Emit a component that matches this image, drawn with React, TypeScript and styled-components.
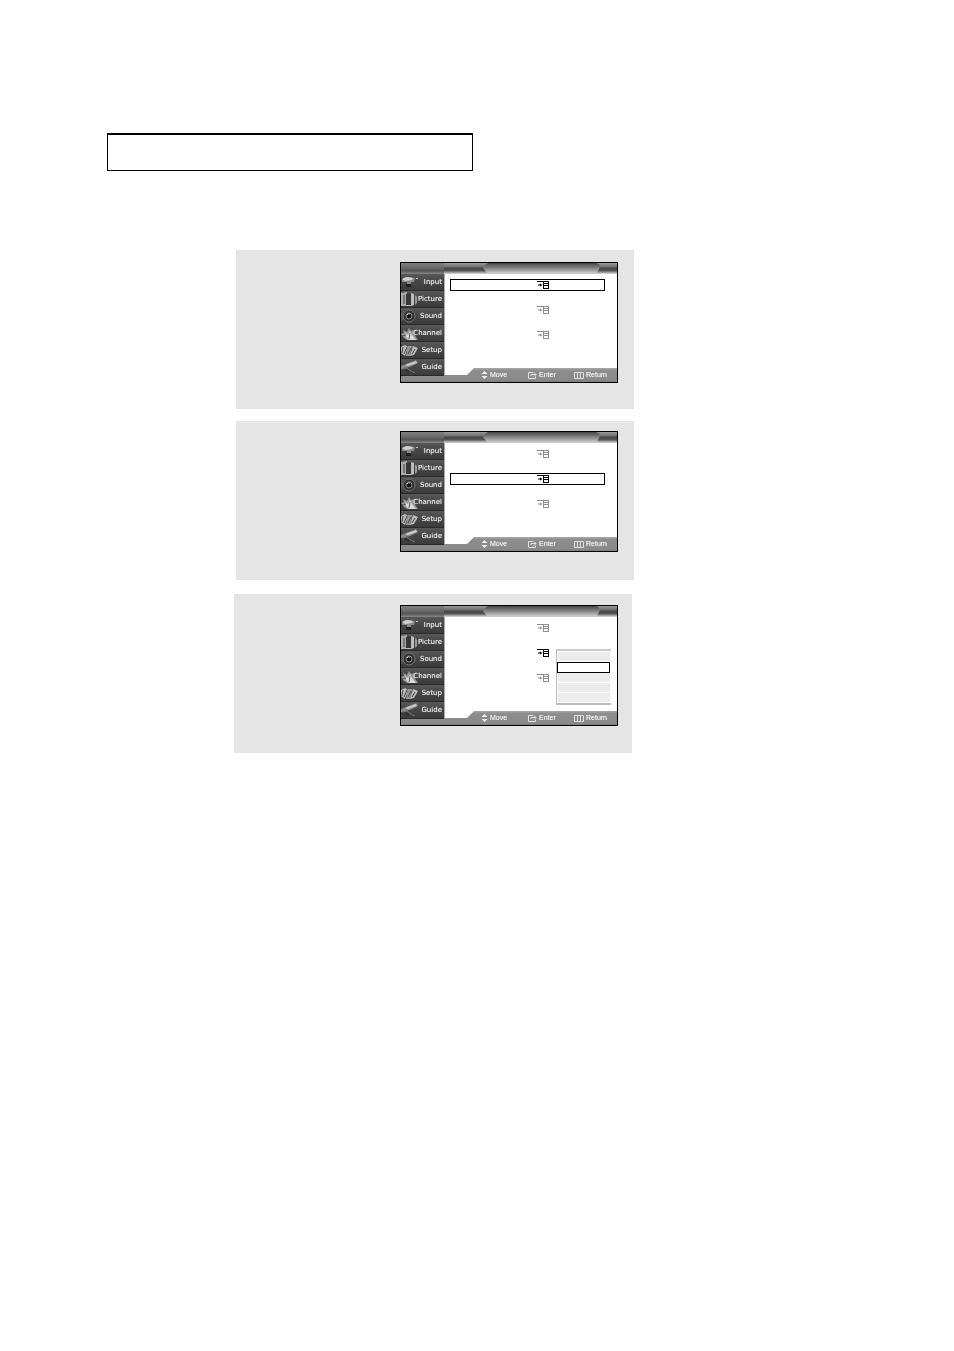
import React from "react";
import styled, { createGlobalStyle } from "styled-components";

const GlobalStyle = createGlobalStyle`
  * { box-sizing: border-box; }
  body { margin: 0; background: #fff; font-family: "Liberation Sans", Arial, sans-serif; }
  ul { list-style: none; margin: 0; padding: 0; }
  button { appearance: none; border: 0; margin: 0; padding: 0; background: none; font: inherit; color: inherit; }
`;

const Page = styled.main`
  padding: 133px 107px;
`;

const TitleBox = styled.header`
  max-width: 366px;
  height: 38px;
  border: 1px solid #000;
  border-top-width: 2px;
`;

const Steps = styled.div`
  display: flex;
  flex-direction: column;
  padding: 79px 0 0 127px;
`;

const Step = styled.section<{ $indent: number; $gap: number; $top: number }>`
  display: flex;
  justify-content: flex-end;
  width: 100%;
  max-width: 398px;
  min-height: 159px;
  margin: ${(p) => p.$gap}px 0 0 ${(p) => p.$indent}px;
  padding: ${(p) => p.$top}px ${(p) => (p.$indent ? 16 : 14)}px 26px 0;
  background: #e5e5e5;
`;

const Screen = styled.div`
  position: relative;
  display: grid;
  grid-template-columns: 44px 1fr;
  grid-template-rows: 11px 94px 7px 7px;
  width: 218px;
  height: 121px;
  border: 1px solid #000;
  background: #fff;
`;

const TopBar = styled.div`
  grid-column: 1 / 3;
  grid-row: 1;
  display: flex;
  filter: blur(0.4px);
`;

const Sidebar = styled.nav`
  grid-column: 1;
  grid-row: 2 / 4;
  z-index: 1;
  border-right: 1px solid #aaa;
`;

const MenuList = styled.ul`
  display: flex;
  flex-direction: column;
  height: 100%;
`;

const MenuItem = styled.li`
  flex: 1;
  display: flex;
  border-bottom: 1px solid #2a2a2a;
  background: linear-gradient(#585858, #484848 40%, #3b3b3b);
`;

const MenuButton = styled.button`
  flex: 1;
  display: flex;
  align-items: center;
  justify-content: space-between;
  padding-right: 2px;
`;

const MenuIcon = styled.svg`
  width: 17px;
  height: 16px;
  flex: none;
  filter: blur(0.5px);
`;

const MenuLabel = styled.span`
  margin-left: -6px;
  font: 7px/10px "DejaVu Sans", sans-serif;
  color: #eee;
  text-shadow: 0 0 1px #aaa;
  filter: blur(0.5px);
`;

const Options = styled.ul`
  grid-column: 2;
  grid-row: 2;
  display: flex;
  flex-direction: column;
  gap: 13px;
  padding: 5px 12px 0 5px;
`;

const Option = styled.li<{ $framed: boolean; $active: boolean }>`
  display: flex;
  align-items: flex-end;
  height: 12px;
  padding: 0 0 1px 86px;
  border: 1px solid ${(p) => (p.$framed ? "#000" : "transparent")};
  color: ${(p) => (p.$active ? "#000" : "#8e8e8e")};
`;

const HelpBar = styled.footer`
  grid-column: 1 / 3;
  grid-row: 3 / 5;
  display: flex;
  align-items: center;
  padding-left: 80px;
  background: linear-gradient(#a8a8a8, #8c8c8c 20%, #8a8a8a 85%, #7c7c7c);
  clip-path: polygon(0 7px, 66px 7px, 73px 0, 100% 0, 100% 100%, 0 100%);
  color: #f4f4f4;
  font-size: 7px;
  line-height: 10px;
  text-shadow: 0 0 1px #ccc;
`;

const HelpItem = styled.span<{ $width: number }>`
  display: flex;
  align-items: center;
  gap: 2px;
  width: ${(p) => p.$width}px;
  filter: blur(0.5px);
`;

const HelpIcon = styled.svg`
  flex: none;
  height: 9px;
`;

const Popup = styled.ul`
  position: absolute;
  top: 43px;
  right: 6px;
  display: flex;
  flex-direction: column;
  width: 55px;
  padding: 1px 1px 0;
  border: solid #bdbdbd;
  border-width: 2px 0 2px 1px;
  border-top-color: #c9c9c9;
  background: #fff;
`;

const PopupRow = styled.li<{ $active: boolean }>`
  height: ${(p) => (p.$active ? 11 : 10)}px;
  margin-left: ${(p) => (p.$active ? -1 : 0)}px;
  border: 0 solid #fff;
  border-bottom-width: 1px;
  background: #ececec;
  ${(p) => p.$active && "border: 1px solid #000; background: #fff;"}
`;

const menu = [
  {
    label: "Input",
    art: (
      <>
        <path d="M1 6 Q2 3 6 3 L14 4 L13 8 L10 8 L10 11 L6 11 L6 8 L1 8Z" fill="#888" />
        <path d="M1 5 L6 3 L12 4 L11 6 L4 7Z" fill="#d2d2d2" />
        <path d="M5 10 L10 10 L10 13 L5 13Z" fill="#1f1f1f" />
        <path d="M15 4.5 H17" stroke="#ccc" />
      </>
    ),
  },
  {
    label: "Picture",
    art: (
      <>
        <path d="M0 2 L6 1 V15 H0Z" fill="#a9a9a9" />
        <path d="M2 4 H4 V13 H2Z" fill="#777" />
        <path d="M5 3 L10 2 V14 H5Z" fill="#373737" />
        <path d="M10 2 L13 3 V14 L10 15 H5 V14 H10Z" fill="#bdbdbd" />
        <path d="M14 4 L16 6 V12 L14 14Z" fill="#999" />
      </>
    ),
  },
  {
    label: "Sound",
    art: (
      <>
        <circle cx="8" cy="8" r="6" fill="#333" stroke="#757575" />
        <circle cx="8" cy="8" r="3" fill="#111" stroke="#888" />
        <path d="M6 7 Q7 5 9 6" stroke="#c2c2c2" fill="none" />
        <path d="M1 3 V13" stroke="#666" />
      </>
    ),
  },
  {
    label: "Channel",
    art: (
      <>
        <path d="M0 9 L3 8 L2 5 L6 7 L8 3 L10 6 L13 5 L13 9 L17 15 H6 L3 13Z" fill="#999" />
        <path d="M4 8 L7 10 L9 6 L11 10 L15 15 H8 L5 12Z" fill="#d9d9d9" />
        <path d="M1 11 L5 10 M9 8 L8 14" stroke="#555" />
      </>
    ),
  },
  {
    label: "Setup",
    art: (
      <>
        <path d="M0 5 L4 3 L7 5 L4 14 L0 11Z" fill="#bbb" />
        <path d="M7 4 L11 4 L9 14 L5 14Z" fill="#999" />
        <path d="M12 4 L17 6 L13 13 L9 14Z" fill="#bdbdbd" />
        <path d="M2 5 L1 11 M6 5 L3 12 M10 6 L7 12 M14 7 L11 12" stroke="#444" />
      </>
    ),
  },
  {
    label: "Guide",
    art: (
      <>
        <path d="M0 7 L15 1 L17 4 L9 8 L4 9 L0 10Z" fill="#8a8a8a" />
        <path d="M4 6 L15 2 L16 4 L7 7Z" fill="#ccc" />
        <path d="M1 10 L6 9 L10 12 L14 14" stroke="#777" fill="none" />
        <path d="M4 11 L8 13" stroke="#222" />
      </>
    ),
  },
];

const SourceIcon = () => (
  <svg width="12" height="8" viewBox="0 0 12 8" aria-hidden="true">
    <path
      d="M0 .5H12M6.5 0V8M11.5 1V8M7 2.5H11M7 4.5H11M6 7.5H12"
      fill="none"
      stroke="currentColor"
      shapeRendering="crispEdges"
    />
    <path d="M1 3.5H3V2.5L5.5 4L3 5.5V4.5H1Z" fill="currentColor" />
  </svg>
);

const TopBarArt = ({ id }: { id: string }) => (
  <svg width="100%" height="11" viewBox="0 0 216 11" preserveAspectRatio="none" aria-hidden="true">
    <defs>
      <linearGradient id={`${id}-bar`} x2="0" y2="1">
        <stop offset="0" stopColor="#999" />
        <stop offset=".3" stopColor="#777" />
        <stop offset=".5" stopColor="#484848" />
        <stop offset=".7" stopColor="#555" />
        <stop offset=".88" stopColor="#aaa" />
        <stop offset="1" stopColor="#ddd" />
      </linearGradient>
      <linearGradient id={`${id}-pill`} x2="0" y2="1">
        <stop offset="0" stopColor="#454545" />
        <stop offset=".4" stopColor="#777" />
        <stop offset=".8" stopColor="#aaa" />
        <stop offset="1" stopColor="#ccc" />
      </linearGradient>
      <linearGradient id={`${id}-corner`} x2="0" y2="1">
        <stop offset="0" stopColor="#808080" />
        <stop offset=".4" stopColor="#6c6c6c" />
        <stop offset=".7" stopColor="#555" />
        <stop offset="1" stopColor="#888" />
      </linearGradient>
    </defs>
    <rect width="216" height="11" fill={`url(#${id}-bar)`} />
    <rect width="43" height="11" fill={`url(#${id}-corner)`} />
    <path d="M87 0H195Q199 1 199 4L196 10H86L82 5Q83 2 87 0Z" fill={`url(#${id}-pill)`} />
  </svg>
);

const HelpContent = () => (
  <HelpBar>
    <HelpItem $width={46}>
      <HelpIcon width="7" viewBox="0 0 7 9" aria-hidden="true">
        <path d="M3.5 0 L6.5 3 H.5Z M.5 5 H6.5 L3.5 8Z" fill="#eee" />
      </HelpIcon>
      Move
    </HelpItem>
    <HelpItem $width={47}>
      <HelpIcon width="10" viewBox="0 0 10 9" fill="none" stroke="#e2e2e2" aria-hidden="true">
        <path d="M6 1.5H1.5V7.5H8.5V5.5 M4 5V3.5H9 M7 1.5L9 3.5L7 5.5" />
      </HelpIcon>
      Enter
    </HelpItem>
    <HelpItem $width={36}>
      <HelpIcon width="10" viewBox="0 0 10 9" fill="none" stroke="#ddd" aria-hidden="true">
        <path d="M.5 1.5H9.5V7.5H.5Z M3.5 2V7 M6.5 2V7" />
      </HelpIcon>
      Return
    </HelpItem>
  </HelpBar>
);

type TvProps = { id: string; active: number; popup?: boolean };

const TvScreen = ({ id, active, popup = false }: TvProps) => (
  <Screen>
    <TopBar>
      <TopBarArt id={id} />
    </TopBar>
    <Sidebar aria-label="TV menu">
      <MenuList>
        {menu.map((item) => (
          <MenuItem key={item.label}>
            <MenuButton type="button">
              <MenuIcon viewBox="0 0 17 16" aria-hidden="true">{item.art}</MenuIcon>
              <MenuLabel>{item.label}</MenuLabel>
            </MenuButton>
          </MenuItem>
        ))}
      </MenuList>
    </Sidebar>
    <Options>
      {[0, 1, 2].map((i) => (
        <Option key={i} $active={i === active} $framed={i === active && !popup}>
          <SourceIcon />
        </Option>
      ))}
    </Options>
    <HelpContent />
    {popup && (
      <Popup>
        {[0, 1, 2, 3, 4].map((i) => (
          <PopupRow key={i} $active={i === 1} />
        ))}
      </Popup>
    )}
  </Screen>
);

export default function App() {
  return (
    <>
      <GlobalStyle />
      <Page>
        <TitleBox />
        <Steps>
          <Step $indent={2} $gap={0} $top={12}>
            <TvScreen id="first" active={0} />
          </Step>
          <Step $indent={2} $gap={12} $top={10}>
            <TvScreen id="second" active={1} />
          </Step>
          <Step $indent={0} $gap={14} $top={11}>
            <TvScreen id="third" active={1} popup />
          </Step>
        </Steps>
      </Page>
    </>
  );
}
